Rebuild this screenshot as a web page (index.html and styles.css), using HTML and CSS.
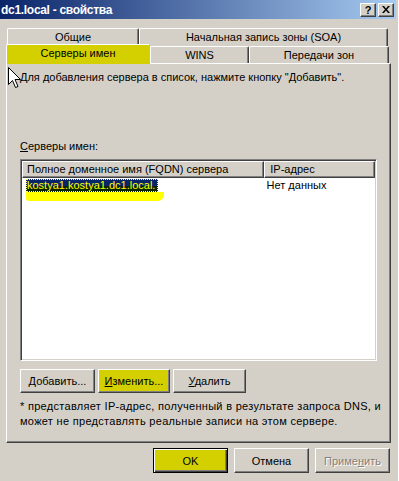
FILE: index.html
```html
<!DOCTYPE html>
<html>
<head>
    <title>dc1.local - свойства</title>
    <link rel="stylesheet" href="styles.css">
</head>
<body>
    <div class="window">
        <div class="titlebar">
            <span class="title">dc1.local - свойства</span>
            <div class="title-buttons">
                <span class="tbtn help">?</span>
                <span class="tbtn">
                    <svg width="8" height="7" viewBox="0 0 8 7">
                        <path d="M0 0h2l2 2.5L6 0h2L5 3.5 8 7H6L4 4.5 2 7H0l3-3.5z" fill="#000"/>
                    </svg>
                </span>
            </div>
        </div>

        <div class="tabs">
            <div class="tab-row back">
                <div class="tab tab-general">Общие</div>
                <div class="tab tab-soa">Начальная запись зоны (SOA)</div>
            </div>
            <div class="tab-row front">
                <div class="tab tab-ns active">Серверы имен</div>
                <div class="tab tab-wins">WINS</div>
                <div class="tab tab-xfer">Передачи зон</div>
            </div>
        </div>

        <div class="panel">
            <p class="hint">Для добавления сервера в список, нажмите кнопку "Добавить".</p>

            <label class="list-label"><u>С</u>ерверы имен:</label>
            <div class="listview">
                <div class="lv-header">
                    <span class="col-name">Полное доменное имя (FQDN) сервера</span>
                    <span class="col-ip">IP-адрес</span>
                </div>
                <div class="lv-row">
                    <span class="col-name"><span class="selected">kostya1.kostya1.dc1.local.</span></span>
                    <span class="col-ip">Нет данных</span>
                </div>
                <div class="marker"></div>
            </div>

            <div class="btn-row">
                <button class="btn btn-add"><u>Д</u>обавить...</button>
                <button class="btn btn-edit marked"><u>И</u>зменить...</button>
                <button class="btn btn-del"><u>У</u>далить</button>
            </div>

            <p class="note">* представляет IP-адрес, полученный в результате запроса DNS, и<br>
                может не представлять реальные записи на этом сервере.</p>
        </div>

        <div class="dialog-buttons">
            <button class="btn default marked">OK</button>
            <button class="btn">Отмена</button>
            <button class="btn disabled">Приме<u>н</u>ить</button>
        </div>

        <!-- mouse pointer over the tab panel -->
        <svg class="cursor" width="13" height="22" viewBox="0 0 13 22">
            <path d="M0.5 0.5v17l4-4 3 7 2.5-1-3-7h5.5z" fill="#fff" stroke="#000"/>
        </svg>
    </div>
</body>
</html>
```

FILE: styles.css
```css
body {
    margin: 0;
    background: #d4d0c8;
    font-family: "Liberation Sans", Arial, sans-serif;
    font-size: 11px;
    color: #000;
}
.window {
    position: relative;
    width: 399px;
    height: 481px;
    overflow: hidden;
    border-right: 1px solid #fff;
    box-sizing: border-box;
}
.titlebar {
    display: flex;
    align-items: center;
    justify-content: space-between;
    height: 19px;
    margin-right: 2px;
    padding: 0 2px 0 1px;
    background: linear-gradient(to right, #0a246a, #a6caf0);
}
.title {
    color: #fff;
    font-weight: bold;
    font-size: 12px;
    letter-spacing: -0.3px;
}
.title-buttons {
    display: flex;
    gap: 2px;
}
.tbtn {
    display: flex;
    align-items: center;
    justify-content: center;
    width: 16px;
    height: 14px;
    box-sizing: border-box;
    background: #d4d0c8;
    border: 1px solid;
    border-color: #fff #404040 #404040 #fff;
    box-shadow: inset -1px -1px #808080;
}
.tbtn.help {
    font-weight: bold;
    font-size: 11px;
    line-height: 12px;
}

/* tabs */
.tabs {
    margin: 9px 0 0 6px;
    width: 384px;
}
.tab-row {
    display: flex;
    align-items: flex-end;
}
.tab-row.back {
    height: 18px;
    padding-left: 1px;
}
.tab-row.front {
    height: 17px;
}
.tab {
    box-sizing: border-box;
    height: 100%;
    text-align: center;
    line-height: 16px;
    border-top: 1px solid #fff;
    border-left: 1px solid #fff;
    border-right: 1px solid #404040;
    border-radius: 2px 2px 0 0;
    box-shadow: inset -1px 0 #808080;
}
.tab-general { width: 132px; }
.tab-soa { width: 249px; }
.tab-ns { width: 144px; }
.tab-wins { width: 99px; }
.tab-xfer { width: 140px; }
.tab.active {
    position: relative;
    z-index: 1;
    height: 20px;
    margin-bottom: -1px;
    line-height: 17px;
    background: #d4d000;
    border-right-color: #d4d000;
    box-shadow: none;
}

/* property page */
.panel {
    margin-left: 6px;
    width: 385px;
    height: 380px;
    box-sizing: border-box;
    padding: 7px 0 0 13px;
    border: 1px solid;
    border-color: #fff #404040 #404040 #fff;
    box-shadow: inset -1px -1px #808080;
}
.hint {
    margin: 0;
    line-height: 13px;
}
.list-label {
    display: block;
    margin-top: 56px;
    line-height: 13px;
}
.listview {
    margin-top: 6px;
    width: 357px;
    height: 202px;
    box-sizing: border-box;
    background: #fff;
    border: 1px solid;
    border-color: #808080 #fff #fff #808080;
    box-shadow: inset 1px 1px #404040, inset -1px -1px #d4d0c8;
    padding: 1px;
}
.lv-header {
    display: flex;
    height: 17px;
}
.lv-header span {
    box-sizing: border-box;
    height: 17px;
    line-height: 15px;
    background: #d4d0c8;
    border: 1px solid;
    border-color: #fff #404040 #404040 #fff;
    box-shadow: inset -1px -1px #808080;
}
.col-name {
    width: 243px;
    padding-left: 4px;
}
.col-ip {
    width: 110px;
    padding-left: 5px;
}
.lv-header .col-ip {
    width: 111px;
}
.lv-row {
    display: flex;
    margin-top: 1px;
    line-height: 13px;
    height: 13px;
}
.lv-row .col-name {
    box-sizing: border-box;
}
.selected {
    display: inline-block;
    padding: 0 3px 0 1px;
    color: #ffff00;
    background: linear-gradient(#0a246a 55%, #0a2400 55%);
    outline: 1px dotted #ffff66;
    outline-offset: -1px;
}
.marker {
    margin: 0 0 0 4px;
    width: 138px;
    height: 9px;
    background: #ffff00;
    border-radius: 0 0 6px 3px;
}
.btn-row {
    display: flex;
    gap: 3px;
    margin-top: 8px;
}
.btn {
    font: inherit;
    color: #000;
    height: 24px;
    padding: 0;
    box-sizing: border-box;
    background: #d4d0c8;
    border: 1px solid;
    border-color: #fff #404040 #404040 #fff;
    box-shadow: inset -1px -1px #808080;
}
.btn-add { width: 75px; }
.btn-edit { width: 72px; }
.btn-del { width: 73px; }
.btn.marked {
    background: #d4d000;
}
.note {
    margin: 6px 0 0;
    line-height: 15px;
    letter-spacing: 0.3px;
}

/* OK / Cancel / Apply */
.dialog-buttons {
    display: flex;
    justify-content: flex-end;
    gap: 6px;
    margin-top: 5px;
    padding-right: 8px;
}
.dialog-buttons .btn {
    width: 75px;
    height: 25px;
}
.btn.default {
    border: 1px solid #000;
    box-shadow: inset 1px 1px #fff, inset -1px -1px #404040, inset -2px -2px #808080;
}
.btn.disabled {
    color: #808080;
    text-shadow: 1px 1px #fff;
}
.cursor {
    position: absolute;
    left: 8px;
    top: 67px;
}
```
